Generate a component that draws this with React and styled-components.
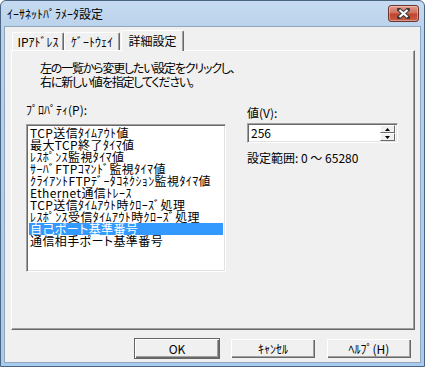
import React from "react";
import styled, { createGlobalStyle } from "styled-components";

const GlobalStyle = createGlobalStyle`
  html, body {
    margin: 0;
    padding: 0;
    background: #ffffff;
  }
  body {
    font-family: "Noto Sans CJK JP", "Liberation Sans", sans-serif;
    font-size: 12px;
    font-feature-settings: "palt";
    color: #000;
  }
`;

const Window = styled.div`
  width: 425px;
  height: 367px;
  box-sizing: border-box;
  border: 1px solid #4a6582;
  border-radius: 6px 6px 0 0;
  background: linear-gradient(#c6dbf1, #b9d1ea 30px, #a8cbee);
  display: flex;
  flex-direction: column;
  padding: 0 3px 3px;
`;

const TitleBar = styled.div`
  height: 25px;
  display: flex;
  justify-content: space-between;
  align-items: flex-start;
  padding: 0 2px 0 3px;
`;

const Title = styled.span`
  line-height: 25px;
  font-size: 12px;
  color: #000;
`;

const CloseButton = styled.div`
  width: 29px;
  height: 15px;
  margin-top: 4px;
  border: 1px solid #6b3530;
  border-radius: 3px;
  background: linear-gradient(#e39a8c, #d0705f 45%, #c0432f 55%, #c95f4a);
  box-shadow: inset 0 0 0 1px rgba(255, 255, 255, 0.35);
  display: flex;
  align-items: center;
  justify-content: center;
`;

const Client = styled.div`
  flex: 1;
  border: 1px solid #8ea6c0;
  background: #f0f0f0;
  display: flex;
  flex-direction: column;
  padding: 3px 5px 3px 6px;
`;

const TabRow = styled.div`
  height: 20px;
  display: flex;
  align-items: flex-end;
  padding-left: 1px;
`;

const Tab = styled.div`
  box-sizing: border-box;
  width: ${(p) => p.$w}px;
  height: ${(p) => (p.$active ? 21 : 18)}px;
  margin-bottom: ${(p) => (p.$active ? -1 : 0)}px;
  margin-left: ${(p) => (p.$active ? 1 : 0)}px;
  position: relative;
  z-index: ${(p) => (p.$active ? 1 : 0)};
  background: #f0f0f0;
  border-top: 1px solid #ffffff;
  border-left: 1px solid #ffffff;
  border-right: 1px solid #696969;
  box-shadow: inset -1px 0 0 #a0a0a0;
  border-radius: 2px 2px 0 0;
  display: flex;
  justify-content: center;
  align-items: ${(p) => (p.$active ? "flex-start" : "center")};
  padding-top: ${(p) => (p.$active ? 3 : 0)}px;
  line-height: 14px;
`;

const Panel = styled.div`
  height: 280px;
  box-sizing: border-box;
  border-top: 1px solid #ffffff;
  border-left: 1px solid #ffffff;
  border-right: 1px solid #696969;
  border-bottom: 1px solid #696969;
  box-shadow: inset -1px -1px 0 #a0a0a0;
  display: flex;
  flex-direction: column;
`;

const Instruction = styled.p`
  margin: 10px 0 0 28px;
  line-height: 14px;
  letter-spacing: -1.2px;
`;

const Columns = styled.div`
  display: flex;
  margin-top: 14px;
  padding-left: 14px;
  gap: 21px;
`;

const Column = styled.div`
  display: flex;
  flex-direction: column;
  width: ${(p) => p.$w}px;
`;

const Label = styled.div`
  line-height: 14px;
  margin-top: ${(p) => p.$top || 0}px;
`;

const ListBox = styled.div`
  box-sizing: border-box;
  height: 148px;
  margin-top: 7px;
  background: #ffffff;
  border-top: 1px solid #a0a0a0;
  border-left: 1px solid #a0a0a0;
  border-right: 1px solid #ffffff;
  border-bottom: 1px solid #ffffff;
  box-shadow: inset 1px 1px 0 #696969, inset -1px -1px 0 #e3e3e3;
  padding: 2px 2px;
`;

const Item = styled.div`
  height: 12px;
  line-height: 12px;
  padding-left: 1px;
  white-space: nowrap;
  letter-spacing: 0.4px;
  background: ${(p) => (p.$selected ? "#3399ff" : "transparent")};
  color: ${(p) => (p.$selected ? "#ffffff" : "#000000")};
`;

const Edit = styled.div`
  box-sizing: border-box;
  height: 20px;
  margin-top: 3px;
  background: #ffffff;
  border-top: 1px solid #a0a0a0;
  border-left: 1px solid #a0a0a0;
  border-right: 1px solid #ffffff;
  border-bottom: 1px solid #ffffff;
  box-shadow: inset 1px 1px 0 #696969, inset -1px -1px 0 #e3e3e3;
  display: flex;
  align-items: center;
  padding: 0 2px 0 3px;
`;

const EditText = styled.span`
  flex: 1;
  line-height: 14px;
`;

const Spin = styled.div`
  display: flex;
  flex-direction: column;
`;

const SpinButton = styled.div`
  box-sizing: border-box;
  width: 15px;
  height: 8px;
  background: #f0f0f0;
  border-top: 1px solid #ffffff;
  border-left: 1px solid #ffffff;
  border-right: 1px solid #696969;
  border-bottom: 1px solid #696969;
  display: flex;
  align-items: center;
  justify-content: center;
`;

const Footer = styled.div`
  display: flex;
  justify-content: flex-end;
  gap: 10px;
  margin-top: 8px;
  padding-right: 3px;
`;

const Button = styled.div`
  box-sizing: border-box;
  width: 86px;
  height: 21px;
  background: #f0f0f0;
  border: 1px solid ${(p) => (p.$default ? "#646464" : "transparent")};
  box-shadow: inset 1px 1px 0 #ffffff, inset -1px -1px 0 #696969,
    inset -2px -2px 0 #a0a0a0;
  display: flex;
  align-items: center;
  justify-content: center;
  line-height: 14px;
`;

const items = [
  "TCP送信ﾀｲﾑｱｳﾄ値",
  "最大TCP終了ﾀｲﾏ値",
  "ﾚｽﾎﾟﾝｽ監視ﾀｲﾏ値",
  "ｻｰﾊﾞFTPｺﾏﾝﾄﾞ監視ﾀｲﾏ値",
  "ｸﾗｲｱﾝﾄFTPﾃﾞｰﾀｺﾈｸｼｮﾝ監視ﾀｲﾏ値",
  "Ethernet通信ﾄﾚｰｽ",
  "TCP送信ﾀｲﾑｱｳﾄ時ｸﾛｰｽﾞ処理",
  "ﾚｽﾎﾟﾝｽ受信ﾀｲﾑｱｳﾄ時ｸﾛｰｽﾞ処理",
  "自己ポート基準番号",
  "通信相手ポート基準番号",
];

export default function App() {
  return (
    <>
      <GlobalStyle />
      <Window>
        <TitleBar>
          <Title>ｲｰｻﾈｯﾄﾊﾟﾗﾒｰﾀ設定</Title>
          <CloseButton>
            <svg width="13" height="11" viewBox="0 0 13 11">
              <path d="M2 1.5 L11 9.5 M11 1.5 L2 9.5" stroke="#3a3a3a" strokeWidth="4" strokeLinecap="square" />
              <path d="M2.5 2 L10.5 9 M10.5 2 L2.5 9" stroke="#ffffff" strokeWidth="2.2" />
            </svg>
          </CloseButton>
        </TitleBar>
        <Client>
          <TabRow>
            <Tab $w={52}>IPｱﾄﾞﾚｽ</Tab>
            <Tab $w={56}>ｹﾞｰﾄｳｪｲ</Tab>
            <Tab $w={63} $active>詳細設定</Tab>
          </TabRow>
          <Panel>
            <Instruction>
              左の一覧から変更したい設定をクリックし、
              <br />
              右に新しい値を指定してください。
            </Instruction>
            <Columns>
              <Column $w={200}>
                <Label>ﾌﾟﾛﾊﾟﾃｨ(P):</Label>
                <ListBox>
                  {items.map((t, i) => (
                    <Item key={t} $selected={i === 8}>
                      {t}
                    </Item>
                  ))}
                </ListBox>
              </Column>
              <Column $w={151}>
                <Label $top={3}>値(V):</Label>
                <Edit>
                  <EditText>256</EditText>
                  <Spin>
                    <SpinButton>
                      <svg width="5" height="3" viewBox="0 0 5 3">
                        <path d="M2.5 0 L5 3 L0 3 Z" fill="#000" />
                      </svg>
                    </SpinButton>
                    <SpinButton>
                      <svg width="5" height="3" viewBox="0 0 5 3">
                        <path d="M0 0 L5 0 L2.5 3 Z" fill="#000" />
                      </svg>
                    </SpinButton>
                  </Spin>
                </Edit>
                <Label $top={8}>設定範囲: 0 ～ 65280</Label>
              </Column>
            </Columns>
          </Panel>
          <Footer>
            <Button $default>OK</Button>
            <Button>ｷｬﾝｾﾙ</Button>
            <Button>ﾍﾙﾌﾟ(H)</Button>
          </Footer>
        </Client>
      </Window>
    </>
  );
}
